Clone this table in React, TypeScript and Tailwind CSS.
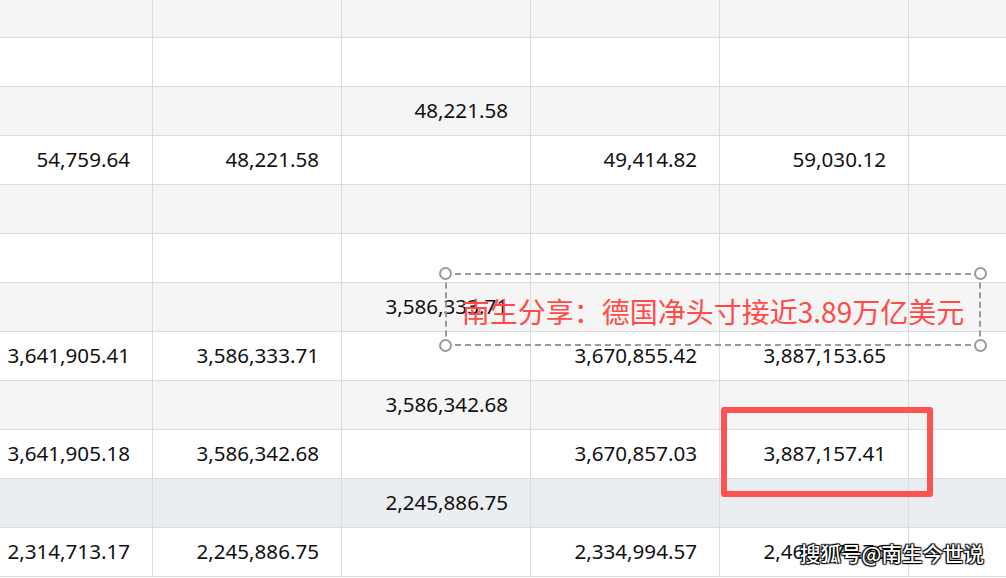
type Row = { tone: "gray" | "white" | "blue"; cells: string[] };

const rows: Row[] = [
  { tone: "gray", cells: ["", "", "", "", "", ""] },
  { tone: "white", cells: ["", "", "", "", "", ""] },
  { tone: "gray", cells: ["", "", "48,221.58", "", "", ""] },
  { tone: "white", cells: ["54,759.64", "48,221.58", "", "49,414.82", "59,030.12", ""] },
  { tone: "gray", cells: ["", "", "", "", "", ""] },
  { tone: "white", cells: ["", "", "", "", "", ""] },
  { tone: "gray", cells: ["", "", "3,586,333.71", "", "", ""] },
  { tone: "white", cells: ["3,641,905.41", "3,586,333.71", "", "3,670,855.42", "3,887,153.65", ""] },
  { tone: "gray", cells: ["", "", "3,586,342.68", "", "", ""] },
  { tone: "white", cells: ["3,641,905.18", "3,586,342.68", "", "3,670,857.03", "3,887,157.41", ""] },
  { tone: "blue", cells: ["", "", "2,245,886.75", "", "", ""] },
  { tone: "white", cells: ["2,314,713.17", "2,245,886.75", "", "2,334,994.57", "2,464,073.76", ""] },
];

const toneClass = {
  gray: "bg-[#f5f5f5]",
  white: "bg-white",
  blue: "bg-[#ebeef0]",
};

const Handle = ({ pos }: { pos: string }) => (
  <span className={`absolute w-[13px] h-[13px] rounded-full border-2 border-[#9a9a9a] bg-white ${pos}`} />
);

export default function App() {
  return (
    <div className="relative w-[1006px] h-[578px] overflow-hidden bg-white font-['Noto_Sans','Liberation_Sans',sans-serif] text-[20.6px] text-[#111]">
      <div className="-mt-[11px] flex flex-col">
        {rows.map((row, i) => (
          <div key={i} className={`flex border-b border-[#dcdcdc] ${toneClass[row.tone]}`}>
            {row.cells.map((c, j) => (
              <div
                key={j}
                className={`${j === 0 ? "w-[153px]" : "w-[189px]"} shrink-0 h-[48px] border-r border-[#dcdcdc] flex items-center justify-end pr-[22px] pb-[2px] whitespace-nowrap`}
              >
                {c}
              </div>
            ))}
          </div>
        ))}
      </div>

      {/* text box overlay */}
      <div className="absolute left-[445px] top-[273px] w-[536px] h-[73px] border-2 border-dashed border-[#9a9a9a] flex items-center justify-center">
        <span className="text-[#ff4a4a] text-[28px] font-['Noto_Sans_CJK_SC',sans-serif] whitespace-nowrap pt-[3px]">
          南生分享：德国净头寸接近3.89万亿美元
        </span>
        <Handle pos="-left-[8px] -top-[8px]" />
        <Handle pos="-right-[8px] -top-[8px]" />
        <Handle pos="-left-[8px] -bottom-[8px]" />
        <Handle pos="-right-[8px] -bottom-[8px]" />
      </div>

      {/* highlight */}
      <div className="absolute left-[721px] top-[407px] w-[212px] h-[90px] border-[6px] border-[#fc5252] rounded-[3px]" />

      {/* watermark */}
      <div className="absolute left-[800px] top-[538px] text-white text-[20.5px] font-medium font-['Noto_Sans_CJK_SC',sans-serif] whitespace-nowrap [text-shadow:1px_1px_1px_#000,-1px_-1px_1px_#000,1px_-1px_1px_#000,-1px_1px_1px_#000]">
        搜狐号@南生今世说
      </div>
    </div>
  );
}
